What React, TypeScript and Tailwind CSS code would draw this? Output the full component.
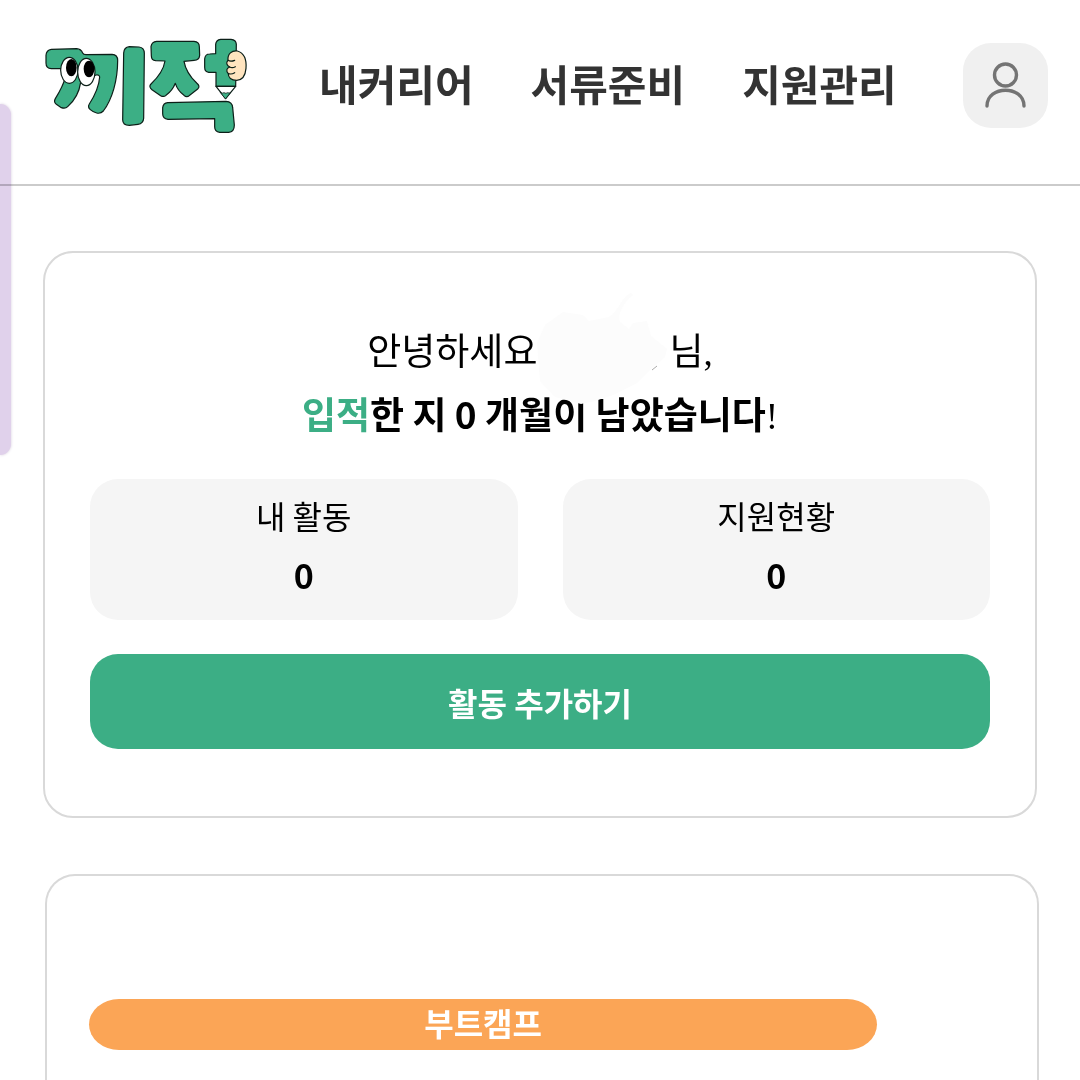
import React from "react";

const navItems = ["내커리어", "서류준비", "지원관리"];

const stats = [
  { label: "내 활동", value: 0 },
  { label: "지원현황", value: 0 },
];

function Logo() {
  return (
    <svg viewBox="0 0 690 360" className="h-[120px] w-[230px]" role="img" aria-label="끼적">
      <g fill="#3caf85" stroke="#0c1f18" strokeWidth="3.6" strokeLinejoin="round" strokeLinecap="round">
        <path d="M64 73 L140 71 Q153 72 158 84 Q160 89 168 89 L246 88 Q263 89 263 106 C263 165 247 222 220 258 Q212 267 200 264 Q190 262 181 254 Q172 246 178 237 C194 212 207 185 209 156 Q208 148 198 150 L152 172 C148 200 133 227 113 245 Q106 252 94 248 L79 238 Q70 231 76 221 C88 201 99 183 105 160 L92 131 L64 131 Q48 130 48 114 L48 91 Q49 75 64 73 Z" />
        <path d="M298 65 L327 66 Q343 68 343 85 L341 280 Q340 296 324 298 L298 301 Q278 301 278 284 L281 84 Q282 67 298 65 Z" />
        <path d="M380 49 L492 49 Q508 50 508 65 L509 91 Q508 106 492 106 L462 109 C466 132 480 155 500 174 Q512 184 503 192 L479 211 Q470 219 462 211 C449 201 440 188 436 175 C430 190 421 202 408 211 Q401 217 392 212 L366 194 Q355 185 363 177 C384 157 401 133 405 108 L377 107 Q364 106 364 92 L363 65 Q365 50 380 49 Z" />
        <path d="M572 43 L603 43 Q618 44 619 58 L617 184 L558 184 L558 142 L536 142 Q524 141 524 127 L524 102 Q525 87 539 87 L557 86 L557 58 Q558 45 572 43 Z" />
        <path d="M413 233 L588 229 Q607 230 608 248 L613 300 Q613 321 596 322 L569 322 Q554 320 554 305 L554 281 L414 283 Q398 281 398 266 L398 248 Q400 234 413 233 Z" />
        <path d="M558 184 L617 184 L587 221 Z" fill="#fff" />
        <path d="M571 202 Q577 207 582 203 Q588 207 593 203 Q598 206 602 202 L587 221 Z" strokeWidth="2.4" />
        <path
          d="M594 106 C592 86 606 76 622 78 C642 84 650 104 648 130 C646 153 636 165 620 166 C604 166 594 158 595 146 C587 138 590 129 599 126 C590 121 587 113 594 106 Z"
          fill="#ffe4bf"
        />
        <path d="M594 106 Q602 111 614 106 M599 126 Q607 130 616 125 M595 146 Q605 149 614 143" fill="none" />
        <ellipse cx="118" cy="136" rx="26" ry="39" fill="#fff" />
        <ellipse cx="169" cy="141" rx="26" ry="41" fill="#fff" />
      </g>
      <ellipse cx="124" cy="128" rx="16" ry="26" fill="#000" />
      <ellipse cx="177" cy="132" rx="16" ry="25" fill="#000" />
    </svg>
  );
}

function ProfileIcon() {
  return (
    <svg viewBox="0 0 85 85" className="size-[85px]" fill="none" stroke="#747474" strokeWidth="3.4" strokeLinecap="round" aria-hidden="true">
      <circle cx="42.5" cy="32" r="11" />
      <path d="M24 63 C24 42 61 42 61 63" />
    </svg>
  );
}

function Smudge() {
  return (
    <svg viewBox="0 0 140 116" className="absolute top-10 left-1/2 -ml-[5px] h-[116px] w-[140px]" aria-hidden="true">
      <path
        d="M10 32 L28 19 L48 22 L54 28 L74 24 C84 18 86 4 96 0 L98 2 C88 10 82 22 85 29 L94 36 L98 30 L112 28 L116 43 L132 56 L130 64 L116 76 L102 90 L78 102 L60 108 L46 111 L20 104 L5 88 L2 50 Z"
        fill="#fcfcfc"
      />
      <path d="M117 77 L122 73" stroke="#aaa" strokeWidth="1" />
    </svg>
  );
}

export default function App() {
  return (
    <div className="relative min-h-screen overflow-hidden bg-white font-['Noto_Sans_CJK_KR',sans-serif] text-black">
      <header className="flex items-center border-b-2 border-[#cbcbcb] pt-[25px] pr-8 pb-[39px] pl-[30px]">
        <a href="#home">
          <Logo />
        </a>
        <nav className="ml-[59px] flex gap-[57px] pb-1">
          {navItems.map((item) => (
            <a key={item} href={`#${item}`} className="text-[42px] leading-[60px] font-bold text-[#333]">
              {item}
            </a>
          ))}
        </nav>
        <button type="button" aria-label="프로필" className="ml-auto shrink-0 rounded-[28px] bg-[#f0f0f0]">
          <ProfileIcon />
        </button>
      </header>

      <div className="absolute top-[104px] left-0 h-[351px] w-[11px] rounded-r-xl bg-[#e0d1eb] mix-blend-multiply shadow-[0_0_3px_#d5cbdc]" />

      <main>
        <section className="relative mx-[43px] mt-[65px] rounded-[30px] border-2 border-[#d9d9d9] px-[45px] pt-16 pb-[67px]">
          <h1 className="text-center text-[37px] leading-[64px]">
            <span className="flex justify-center gap-[132px] font-normal">
              <span>안녕하세요</span>
              <span>
                님<span className="font-['Liberation_Serif',serif] leading-none">,</span>
              </span>
            </span>
            <span className="block font-bold">
              <span className="text-[#3cae85]">입적</span>한 지 0 개월이 남았습니다
              <span className="font-['Liberation_Serif',serif] leading-none font-normal">!</span>
            </span>
          </h1>
          <Smudge />
          <dl className="mt-[34px] grid grid-cols-2 gap-[45px]">
            {stats.map((stat) => (
              <div key={stat.label} className="rounded-[28px] bg-[#f5f5f5] pt-1.5 pb-[15px] text-center leading-[60px]">
                <dt className="text-[32px]">{stat.label}</dt>
                <dd className="text-[34px] font-bold">{stat.value}</dd>
              </div>
            ))}
          </dl>
          <button type="button" className="mt-[34px] w-full rounded-[28px] bg-[#3cae85] pt-0.5 text-[32px] leading-[93px] font-bold text-white">
            활동 추가하기
          </button>
        </section>

        <section className="mr-[41px] ml-[45px] mt-14 rounded-t-[30px] border-2 border-b-0 border-[#d9d9d9] px-[42px] pt-[123px] pb-[30px]">
          <div className="w-[87%] rounded-[30px/50%] bg-[#fba556] pb-1 text-center text-[32px] leading-[47px] font-bold text-white">
            부트캠프
          </div>
        </section>
      </main>
    </div>
  );
}
